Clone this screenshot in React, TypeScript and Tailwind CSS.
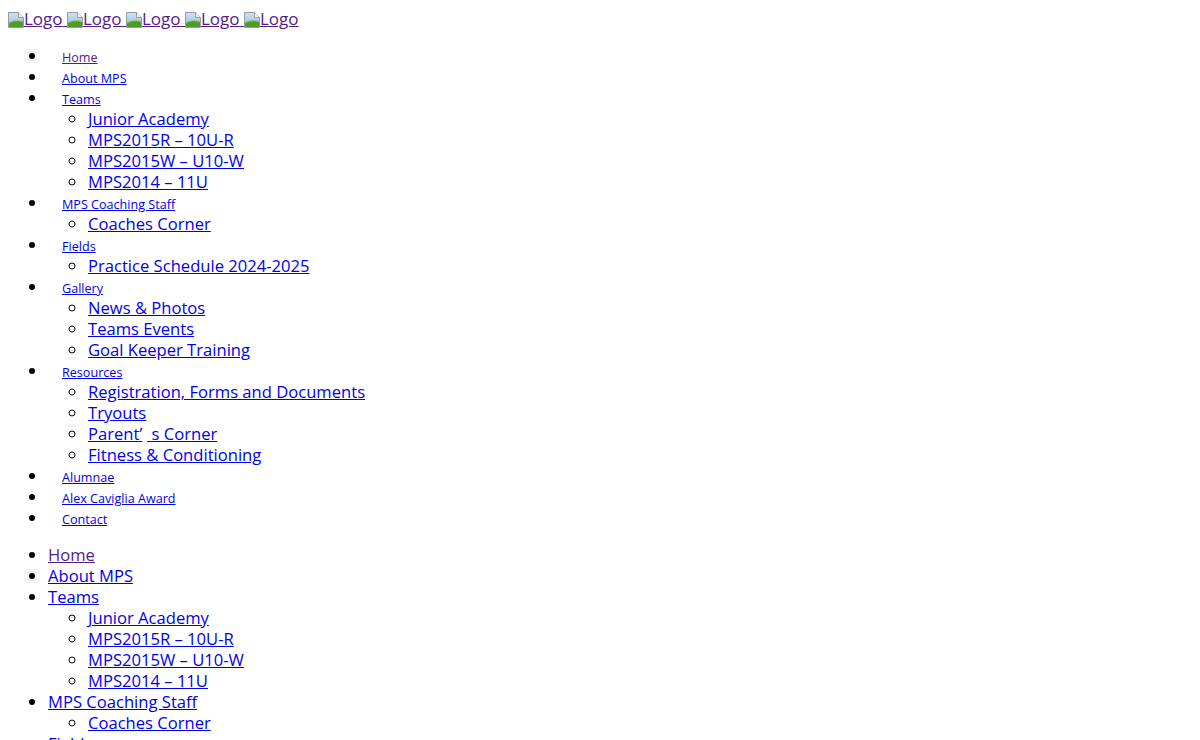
import React from "react";

type Item = { t: React.ReactNode; v?: boolean; sub?: React.ReactNode[] };

const items: Item[] = [
  { t: "Home", v: true },
  { t: "About MPS" },
  { t: "Teams", sub: ["Junior Academy", "MPS2015R – 10U-R", "MPS2015W – U10-W", "MPS2014 – 11U"] },
  { t: "MPS Coaching Staff", sub: ["Coaches Corner"] },
  { t: "Fields", sub: ["Practice Schedule 2024-2025"] },
  { t: "Gallery", sub: ["News & Photos", "Teams Events", "Goal Keeper Training"] },
  {
    t: "Resources",
    sub: [
      "Registration, Forms and Documents",
      "Tryouts",
      <>Parent’<span className="ml-[5px]"> s Corner</span></>,
      "Fitness & Conditioning",
    ],
  },
  { t: "Alumnae" },
  { t: "Alex Caviglia Award" },
  { t: "Contact" },
];

const Broken = () => (
  <svg width="16" height="16" viewBox="0 0 16 16" className="inline-block align-[-3px]">
    <defs>
      <linearGradient id="sky" x1="0" y1="0" x2="0" y2="1">
        <stop offset="0" stopColor="#cfe3f5" />
        <stop offset="1" stopColor="#8fb9e6" />
      </linearGradient>
    </defs>
    <path d="M0.5 0.5 H10.5 L15.5 5.5 V15.5 H0.5 Z" fill="url(#sky)" stroke="#9a9a9a" />
    <path d="M10.5 0.5 V5.5 H15.5" fill="#f4f4f4" stroke="#9a9a9a" />
    <path d="M1 15 L1 11 Q6 7.5 15 9.5 L15 15 Z" fill="#4e9a2a" />
    <path d="M1 11 Q6 7.5 15 9.5" stroke="#8cc63f" fill="none" />
  </svg>
);

export default function App() {
  const link = "underline text-[#0000EE]";
  const visited = "underline text-[#551A8B]";
  return (
    <div
      className="m-2 text-[16.6px] leading-[21px] text-black bg-white"
      style={{ fontFamily: '"Open Sans", "Noto Sans CJK SC", sans-serif' }}
    >
      <div>
        {[0, 1, 2, 3, 4].map((i) => (
          <React.Fragment key={i}>
            <a className={`${visited} text-[17px]`}>
              <Broken />
              Logo{i < 4 ? " " : ""}
            </a>
            {i < 4 ? " " : ""}
          </React.Fragment>
        ))}
      </div>

      <ul className="list-disc pl-10 my-4">
        {items.map((it, i) => (
          <li key={i}>
            <a className={`${it.v ? visited : link} text-[12.6px] leading-[12px] ml-[14px]`}>{it.t}</a>
            {it.sub && (
              <ul className="list-[circle] pl-10">
                {it.sub.map((s, j) => (
                  <li key={j}>
                    <a className={link}>{s}</a>
                  </li>
                ))}
              </ul>
            )}
          </li>
        ))}
      </ul>

      <ul className="list-disc pl-10 my-4">
        {items.map((it, i) => (
          <li key={i}>
            <a className={it.v ? visited : link}>{it.t}</a>
            {it.sub && (
              <ul className="list-[circle] pl-10">
                {it.sub.map((s, j) => (
                  <li key={j}>
                    <a className={link}>{s}</a>
                  </li>
                ))}
              </ul>
            )}
          </li>
        ))}
      </ul>
    </div>
  );
}
